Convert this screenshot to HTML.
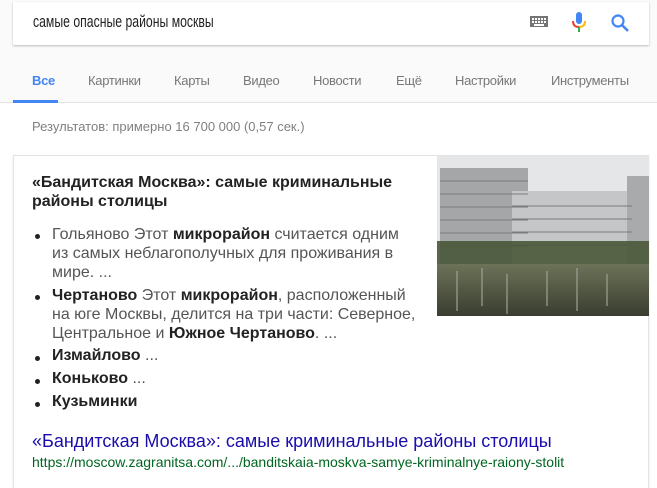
<!DOCTYPE html>
<html><head><meta charset="utf-8"><style>
*{margin:0;padding:0;box-sizing:border-box}
body{width:657px;height:488px;background:#fff;font-family:"Liberation Sans",Arial,sans-serif;position:relative;overflow:hidden;color:#222}
.top{position:absolute;left:0;top:0;width:657px;height:103px;background:#fafafa;border-bottom:1px solid #e4e4e4}
.sb{position:absolute;left:13px;top:2px;width:636px;height:43px;background:#fff;box-shadow:0 1px 2px rgba(0,0,0,.25);}
.q{position:absolute;left:33px;top:12px;font-size:17px;color:#222;transform:scaleX(.72);transform-origin:0 0;white-space:nowrap}
.tab{position:absolute;top:73px;font-size:13px;color:#777;letter-spacing:-.3px}
.abs{position:absolute;white-space:nowrap}
.card{position:absolute;left:13px;top:155px;width:636px;height:333px;border:1px solid #e4e4e4;border-bottom:none;box-shadow:0 1px 2px rgba(0,0,0,.1)}
.t{font-size:16px;color:#222}
b{font-weight:bold;color:#222}
.g{color:#555}
.dot{position:absolute;width:5px;height:5px;border-radius:50%;background:#222;left:29px}
</style></head><body>
<div class="top"></div>
<div class="sb"></div>
<div class="q">самые опасные районы москвы</div>
<svg class="abs" style="left:530px;top:16px" width="18" height="11"><rect width="18" height="11" fill="#757575"/><g fill="#fff"><rect x="2" y="2" width="2" height="2"/><rect x="5" y="2" width="2" height="2"/><rect x="8" y="2" width="2" height="2"/><rect x="11" y="2" width="2" height="2"/><rect x="14" y="2" width="2" height="2"/><rect x="2" y="5" width="2" height="2"/><rect x="5" y="5" width="2" height="2"/><rect x="8" y="5" width="2" height="2"/><rect x="11" y="5" width="2" height="2"/><rect x="14" y="5" width="2" height="2"/><rect x="4" y="8" width="10" height="2"/></g></svg>
<svg class="abs" style="left:571px;top:12px" width="16" height="22"><rect x="5" y="0" width="6" height="12" rx="3" fill="#4285f4"/><path d="M2 9 Q2 15 8 15" stroke="#ea4335" stroke-width="2" fill="none"/><path d="M14 9 Q14 15 8 15" stroke="#fbbc05" stroke-width="2" fill="none"/><rect x="7" y="15" width="2" height="5" fill="#34a853"/></svg>
<svg class="abs" style="left:610px;top:13px" width="20" height="20"><circle cx="8" cy="8" r="5.5" stroke="#4285f4" stroke-width="2.2" fill="none"/><path d="M12 12 L18 18" stroke="#4285f4" stroke-width="2.6"/></svg>
<div class="tab" style="left:32px;color:#4285f4;font-weight:bold">Все</div>
<div class="abs" style="left:13px;top:100px;width:45px;height:3px;background:#4285f4"></div>
<div class="tab" style="left:88px">Картинки</div>
<div class="tab" style="left:174px">Карты</div>
<div class="tab" style="left:243px">Видео</div>
<div class="tab" style="left:313px">Новости</div>
<div class="tab" style="left:396px">Ещё</div>
<div class="tab" style="left:455px">Настройки</div>
<div class="tab" style="left:551px">Инструменты</div>
<div class="abs" style="left:32px;top:119px;font-size:13px;color:#808080">Результатов: примерно 16 700 000 (0,57 сек.)</div>
<div class="card"></div>
<svg class="abs" style="left:437px;top:156px" width="212" height="160"><defs><linearGradient id="w" x1="0" y1="0" x2="0" y2="1"><stop offset="0" stop-color="#6c7358"/><stop offset="1" stop-color="#3a3d30"/></linearGradient></defs><rect width="212" height="160" fill="#e4e6e8"/><rect x="3" y="12" width="88" height="100" fill="#a4a6a8"/><rect x="75" y="35" width="120" height="75" fill="#c4c6c8"/><rect x="190" y="20" width="22" height="90" fill="#a8aaac"/><g stroke="#7a7a7a" stroke-width="1"><path d="M3 25H91M3 38H91M3 51H91M3 64H91M3 77H91M3 90H91M75 50H195M75 63H195M75 76H195M75 89H195"/></g><rect x="0" y="85" width="212" height="25" fill="#4a5838" opacity=".9"/><rect x="0" y="108" width="212" height="52" fill="url(#w)"/><g stroke="#a0a096" stroke-width="2" opacity=".6"><path d="M20 115V155M45 112V150M70 118V158M110 115V150M140 112V155M170 118V150"/></g></svg>
<div class="abs t" style="left:32px;top:173px;font-weight:bold;line-height:19px">«Бандитская Москва»: самые криминальные<br>районы столицы</div>
<div class="dot" style="left:35px;top:234px"></div>
<div class="abs t g" style="left:52px;top:225px;line-height:19px">Гольяново Этот <b>микрорайон</b> считается одним<br>из самых неблагополучных для проживания в<br>мире. ...</div>
<div class="dot" style="left:35px;top:295px"></div>
<div class="abs t g" style="left:52px;top:286px;line-height:19px"><b>Чертаново</b> Этот <b>микрорайон</b>, расположенный<br>на юге Москвы, делится на три части: Северное,<br>Центральное и <b>Южное Чертаново</b>. ...</div>
<div class="dot" style="left:35px;top:356px"></div>
<div class="abs t g" style="left:52px;top:347px"><b>Измайлово</b> ...</div>
<div class="dot" style="left:35px;top:379px"></div>
<div class="abs t g" style="left:52px;top:370px"><b>Коньково</b> ...</div>
<div class="dot" style="left:35px;top:402px"></div>
<div class="abs t g" style="left:52px;top:393px"><b>Кузьминки</b></div>
<div class="abs" style="left:32px;top:431px;font-size:18px;color:#1a0dab">«Бандитская Москва»: самые криминальные районы столицы</div>
<div class="abs" style="left:32px;top:454px;font-size:14px;color:#006621">https://moscow.zagranitsa.com/.../banditskaia-moskva-samye-kriminalnye-raiony-stolit</div>
</body></html>
